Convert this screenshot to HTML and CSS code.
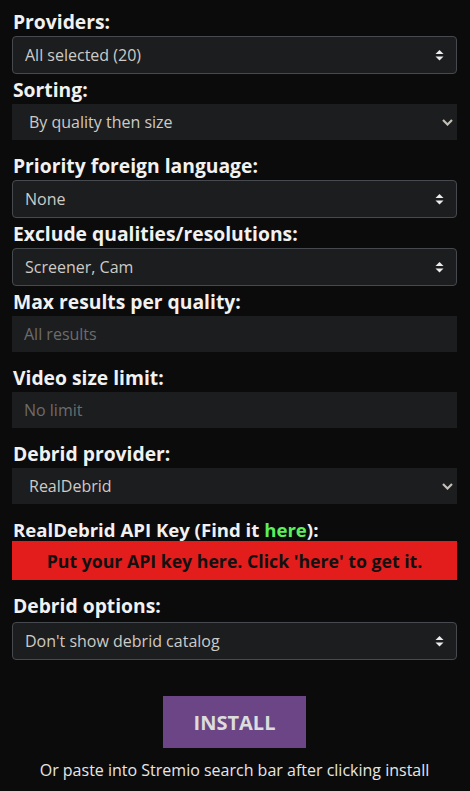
FILE: index.html
```html
<!DOCTYPE html>
<html lang="en">
<head>
<meta charset="utf-8">
<title>Configure</title>
<link rel="stylesheet" href="styles.css">
</head>
<body>
<form class="config">
  <label class="lbl">Providers:</label>
  <div class="field bordered">
    <span>All selected (20)</span>
    <svg class="updown" width="9" height="11" viewBox="0 0 9 11"><path d="M4.5 0 L8.5 4 L0.5 4 Z M0.5 6.5 L8.5 6.5 L4.5 10.5 Z" fill="#ececec"/></svg>
  </div>

  <label class="lbl">Sorting:</label>
  <div class="field plain select">
    <span>By quality then size</span>
    <svg class="chev" width="11" height="7" viewBox="0 0 11 7"><path d="M1 1 L5.5 5.5 L10 1" fill="none" stroke="#c3c0b8" stroke-width="2.2"/></svg>
  </div>

  <label class="lbl">Priority foreign language:</label>
  <div class="field bordered">
    <span>None</span>
    <svg class="updown" width="9" height="11" viewBox="0 0 9 11"><path d="M4.5 0 L8.5 4 L0.5 4 Z M0.5 6.5 L8.5 6.5 L4.5 10.5 Z" fill="#ececec"/></svg>
  </div>

  <label class="lbl">Exclude qualities/resolutions:</label>
  <div class="field bordered">
    <span>Screener, Cam</span>
    <svg class="updown" width="9" height="11" viewBox="0 0 9 11"><path d="M4.5 0 L8.5 4 L0.5 4 Z M0.5 6.5 L8.5 6.5 L4.5 10.5 Z" fill="#ececec"/></svg>
  </div>

  <label class="lbl">Max results per quality:</label>
  <div class="field plain input"><span class="ph">All results</span></div>

  <label class="lbl">Video size limit:</label>
  <div class="field plain input"><span class="ph">No limit</span></div>

  <label class="lbl">Debrid provider:</label>
  <div class="field plain select">
    <span>RealDebrid</span>
    <svg class="chev" width="11" height="7" viewBox="0 0 11 7"><path d="M1 1 L5.5 5.5 L10 1" fill="none" stroke="#c3c0b8" stroke-width="2.2"/></svg>
  </div>

  <label class="lbl lbl-key">RealDebrid API Key (Find it <a class="here" href="#">here</a>):</label>
  <div class="apikey">Put your API key here. Click 'here' to get it.</div>

  <label class="lbl lbl-opts">Debrid options:</label>
  <div class="field bordered">
    <span>Don't show debrid catalog</span>
    <svg class="updown" width="9" height="11" viewBox="0 0 9 11"><path d="M4.5 0 L8.5 4 L0.5 4 Z M0.5 6.5 L8.5 6.5 L4.5 10.5 Z" fill="#ececec"/></svg>
  </div>

  <div class="actions">
    <button type="button" class="install">INSTALL</button>
    <p class="hint">Or paste into Stremio search bar after clicking install</p>
  </div>
</form>
</body>
</html>
```

FILE: styles.css
```css
html, body {
  margin: 0;
  padding: 0;
  background: #0b0b0b;
}
body {
  font-family: "Open Sans", "Liberation Sans", sans-serif;
  color: #e8e8e8;
}
.config {
  display: flex;
  flex-direction: column;
  padding: 10px 13px 0 12px;
}
.lbl {
  display: block;
  font-size: 19.3px;
  font-weight: 700;
  line-height: 24px;
  color: #f1f1f1;
  margin-bottom: 2px;
  padding-left: 1px;
}
.lbl-key {
  font-size: 18.6px;
  margin-bottom: -1px;
}
.lbl-opts {
  margin-bottom: 4px;
}
.here {
  color: #5cf05c;
  text-decoration: none;
}
.field {
  display: flex;
  align-items: center;
  justify-content: space-between;
  background: #1c1d1f;
  font-size: 16px;
  color: #cdcbc6;
  box-sizing: border-box;
}
.bordered {
  height: 38px;
  border: 1px solid #46494e;
  border-radius: 4px;
  padding: 0 12px 0 12px;
  margin-bottom: 4px;
}
.plain {
  height: 36px;
  margin-bottom: 14px;
}
.select {
  padding: 0 4px 0 17px;
}
.input {
  padding: 0 12px;
}
.ph {
  color: #6c6c6c;
}
.updown {
  display: block;
}
.chev {
  display: block;
}
.apikey {
  height: 39px;
  background: #e31c1c;
  color: #111;
  font-size: 17.7px;
  font-weight: 700;
  display: flex;
  align-items: center;
  justify-content: center;
  margin-bottom: 14px;
}
.actions {
  display: flex;
  flex-direction: column;
  align-items: center;
  padding-top: 32px;
}
.install {
  width: 143px;
  height: 52px;
  border: none;
  background: #6c4586;
  color: #dcdcdc;
  font-family: "Open Sans", "Liberation Sans", sans-serif;
  font-size: 20px;
  font-weight: 700;
  padding: 0;
}
.hint {
  margin: 11px 0 0;
  font-size: 16px;
  line-height: 22px;
  color: #e6e6e6;
}
```
